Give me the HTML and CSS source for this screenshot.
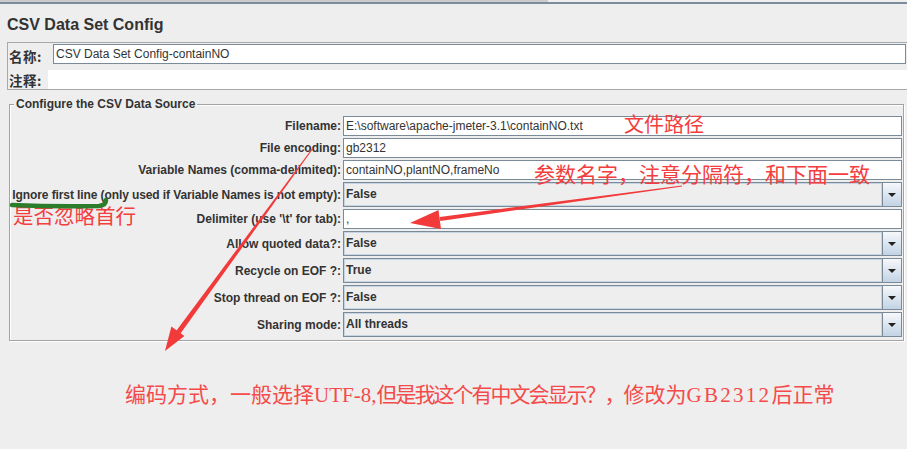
FILE: index.html
```html
<!DOCTYPE html>
<html>
<head>
<meta charset="utf-8">
<link rel="stylesheet" href="styles.css">
</head>
<body>
<div class="tabline"></div>
<div class="topline"></div>
<h1 class="title">CSV Data Set Config</h1>
<div class="namepanel">
  <div class="nrow nrow1"><span class="nlabel nl1">名称:</span><div class="tf ntf">CSV Data Set Config-containNO</div></div>
  <div class="nrow nrow2"><span class="nlabel nl2">注释:</span><div class="ta"></div></div>
</div>
<fieldset class="group">
  <legend>Configure the CSV Data Source</legend>
  <div class="form">
    <label>Filename:</label><div class="tf">E:\software\apache-jmeter-3.1\containNO.txt</div>
    <label>File encoding:</label><div class="tf">gb2312</div>
    <label>Variable Names (comma-delimited):</label><div class="tf">containNO,plantNO,frameNo</div>
    <label class="long">Ignore first line (only used if Variable Names is not empty):</label><div class="combo"><span class="val">False</span><span class="btn"><span class="tri"></span></span></div>
    <label>Delimiter (use '\t' for tab):</label><div class="tf">,</div>
    <label>Allow quoted data?:</label><div class="combo"><span class="val">False</span><span class="btn"><span class="tri"></span></span></div>
    <label>Recycle on EOF ?:</label><div class="combo"><span class="val">True</span><span class="btn"><span class="tri"></span></span></div>
    <label>Stop thread on EOF ?:</label><div class="combo"><span class="val">False</span><span class="btn"><span class="tri"></span></span></div>
    <label>Sharing mode:</label><div class="combo"><span class="val">All threads</span><span class="btn"><span class="tri"></span></span></div>
  </div>
</fieldset>

<div class="note n1">文件路径</div>
<div class="note n2">参数名字，注意分隔符，和下面一致</div>
<div class="note n3">是否忽略首行</div>
<div class="note n4">编码方式，一般选择<span class="lat">UTF-8,</span><span class="mid">但是我这个有中文会显示？，</span>修改为<span class="lat gb">GB2312</span>后正常</div>

<svg class="marks" width="907" height="449" viewBox="0 0 907 449">
  <path d="M12 205 Q55 207 99 206 Q106 205 106 200" fill="none" stroke="#2b7d2b" stroke-width="4.5" stroke-linecap="round"/>
  <polygon points="681.9,185.5 682.1,186.5 440.3,221 439.7,217" fill="#f23a3a"/>
  <polygon points="410,223 438.5,210 441,229" fill="#f23a3a"/>
  <polygon points="312.6,147.7 313.4,148.3 180.5,333.5 176.5,330.5" fill="#f23a3a"/>
  <polygon points="165,351 171.4,326.5 184.4,335.9" fill="#f23a3a"/>
</svg>
</body>
</html>
```
FILE: styles.css
```css
* { box-sizing: border-box; }
html, body { margin: 0; overflow: hidden; }
body {
  width: 907px;
  height: 449px;
  background: #eeeeee;
  font-family: "Liberation Sans", Arial, sans-serif;
  color: #333333;
  position: relative;
}
.tabline { width: 548px; height: 2px; background: #cbcbcb; }
.topline { height: 2px; background: #7c8c9c; }
.title {
  margin: 11px 0 0 7px;
  font-size: 16px;
  line-height: 20px;
  font-weight: bold;
  color: #333;
}
.namepanel {
  margin: 7px -2px 0 7px;
  border: 1px solid #a9a9a9;
}
.nrow { display: flex; align-items: center; }
.nrow1 { height: 22px; }
.nrow2 { height: 19px; margin-top: 5px; }
.nlabel {
  font-family: "Noto Sans CJK SC", sans-serif;
  font-weight: bold;
  font-size: 13.5px;
  line-height: 16px;
  letter-spacing: 0.5px;
  padding-left: 1px;
  color: #333;
  white-space: nowrap;
}
.nl1 { width: 45px; padding-top: 3px; }
.nl2 { width: 40px; }
.ntf { flex: 1; height: 21px; margin-right: 2px; }
.ta { flex: 1; height: 19px; background: #fff; }
.group {
  margin: 7px 3px 0 9px;
  padding: 5px 1px 3px 0;
  border: 1px solid #a3a3a3;
  box-shadow: 1px 1px 0 #fff, inset 1px 1px 0 #fff;
  min-width: 0;
}
.group legend {
  margin-left: 4px;
  padding: 0 2px;
  font-size: 12px;
  line-height: 14px;
  font-weight: bold;
  background: #eeeeee;
  color: #333;
}
.form {
  display: grid;
  grid-template-columns: 331px 1fr;
  column-gap: 2px;
  row-gap: 2px;
}
.form label {
  align-self: center;
  text-align: right;
  font-size: 12px;
  font-weight: bold;
  white-space: nowrap;
  color: #333;
}
.form label.long { letter-spacing: -0.1px; }
.tf {
  height: 20px;
  border: 1px solid #7a8a99;
  background: #fff;
  padding: 0 2px;
  font-size: 12px;
  line-height: 18px;
  white-space: nowrap;
  overflow: hidden;
  color: #333;
}
.combo {
  height: 25px;
  border: 1px solid #7a8a99;
  background: #eeeeee;
  display: flex;
}
.combo .val {
  flex: 1;
  padding-left: 2px;
  font-size: 12px;
  font-weight: bold;
  line-height: 23px;
  box-shadow: inset 1px 1px 0 #c6d5e4, inset -1px -1px 0 #c6d5e4;
}
.combo .btn {
  width: 19px;
  border-left: 1px solid #7a8a99;
  background: linear-gradient(#f6f8fb, #c2d3e5);
  display: flex;
  align-items: center;
  justify-content: center;
}
.tri {
  width: 0;
  height: 0;
  border-left: 4px solid transparent;
  border-right: 4px solid transparent;
  border-top: 4px solid #222;
}
.note {
  position: absolute;
  color: #f43d3d;
  font-family: "Noto Sans CJK SC", sans-serif;
  line-height: 1;
  white-space: nowrap;
}
.n1 { left: 624px; top: 114px; font-size: 20px; }
.n2 { left: 534px; top: 163px; font-size: 21px; }
.n3 { left: 13px; top: 205px; font-size: 20.5px; }
.n4 { left: 125px; top: 383px; font-size: 21px; color: #f54a4a; }
.lat { font-family: "Liberation Serif", serif; }
.mid { letter-spacing: -2px; }
.gb { letter-spacing: 2.3px; }
.marks { position: absolute; left: 0; top: 0; pointer-events: none; }
```
